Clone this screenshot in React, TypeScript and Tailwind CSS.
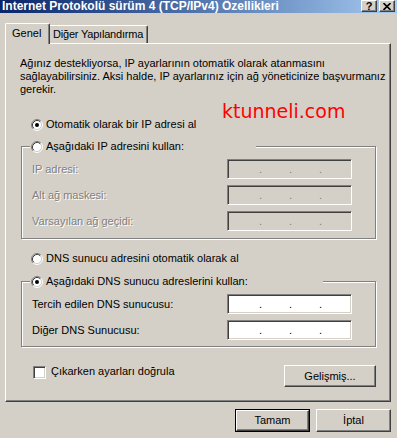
import React from "react";

function Radio({ checked }: { checked?: boolean }) {
  return (
    <svg width="12" height="12" viewBox="0 0 12 12" className="shrink-0">
      <circle cx="6" cy="6" r="4.5" fill="#fff" />
      <path d="M2.11 9.89 A5.5 5.5 0 0 1 9.89 2.11" fill="none" stroke="#808080" strokeWidth="1" />
      <path d="M9.89 2.11 A5.5 5.5 0 0 1 2.11 9.89" fill="none" stroke="#ffffff" strokeWidth="1" />
      <path d="M2.82 9.18 A4.5 4.5 0 0 1 9.18 2.82" fill="none" stroke="#404040" strokeWidth="1" />
      <path d="M9.18 2.82 A4.5 4.5 0 0 1 2.82 9.18" fill="none" stroke="#d4d0c8" strokeWidth="1" />
      {checked && <circle cx="6" cy="6" r="2" fill="#000" />}
    </svg>
  );
}

function IpField({ enabled }: { enabled?: boolean }) {
  const dot = enabled ? "text-black" : "text-[#808080]";
  return (
    <div
      className={`w-[125px] h-[20px] border border-t-[#808080] border-l-[#808080] border-b-white border-r-white shadow-[inset_1px_1px_0_#404040,inset_-1px_-1px_0_#d4d0c8] flex items-center ${
        enabled ? "bg-white" : "bg-[#d4d0c8]"
      }`}
    >
      <span className="w-[31px] shrink-0" />
      <span className={`${dot} w-[3px] shrink-0`}>.</span>
      <span className="w-[27px] shrink-0" />
      <span className={`${dot} w-[3px] shrink-0`}>.</span>
      <span className="w-[27px] shrink-0" />
      <span className={`${dot} w-[3px] shrink-0`}>.</span>
    </div>
  );
}

function Row({ label, enabled }: { label: string; enabled?: boolean }) {
  return (
    <div className="h-[20px] flex items-center">
      <span
        className={`w-[195px] shrink-0 whitespace-nowrap ${
          enabled ? "text-black" : "text-[#808080] [text-shadow:1px_1px_0_#fff]"
        }`}
      >
        {label}
      </span>
      <IpField enabled={enabled} />
    </div>
  );
}

const raised =
  "border border-t-white border-l-white border-r-[#404040] border-b-[#404040] shadow-[inset_-1px_-1px_0_#808080] bg-[#d4d0c8]";

export default function App() {
  return (
    <div className="w-[397px] h-[438px] bg-[#d4d0c8] font-['Liberation_Sans',Arial,sans-serif] text-[11px] leading-[13px] text-black overflow-hidden flex flex-col">
      {/* Title bar */}
      <div className="h-[13px] shrink-0 flex items-start bg-linear-to-r from-[#0a246a] to-[#a6caf0]">
        <span className="pl-[2px] font-bold text-white whitespace-nowrap text-[12px] leading-[13px]">
          Internet Protokolü sürüm 4 (TCP/IPv4) Özellikleri
        </span>
        <div className="ml-auto mr-[2px] flex gap-[2px]">
          <div className={`w-[16px] h-[12px] ${raised} flex items-center justify-center font-bold text-[11px] leading-[10px]`}>
            ?
          </div>
          <div className={`w-[16px] h-[12px] ${raised} flex items-center justify-center`}>
            <svg width="8" height="7" viewBox="0 0 8 7">
              <path d="M0.5 0 L7.5 7 M7.5 0 L0.5 7" stroke="#000" strokeWidth="1.6" />
            </svg>
          </div>
        </div>
      </div>

      {/* Tabs */}
      <div className="mt-[10px] ml-[5px] h-[20px] flex items-end shrink-0">
        <div className="relative z-10 -mb-[1px] w-[45px] h-[21px] border-l border-t border-white border-r border-r-[#404040] rounded-tl-[2px] rounded-tr-[2px] shadow-[inset_-1px_0_0_#808080] bg-[#d4d0c8] pl-[6px] pt-[3px]">
          Genel
        </div>
        <div className="w-[98px] h-[18px] border-t border-white border-r border-r-[#404040] rounded-tr-[2px] shadow-[inset_-1px_0_0_#808080] pl-[3px] pt-[2px] whitespace-nowrap tracking-[-0.2px]">
          Diğer Yapılandırma
        </div>
      </div>

      {/* Panel */}
      <div className="ml-[5px] w-[386px] h-[359px] shrink-0 border border-t-white border-l-white border-r-[#404040] border-b-[#404040] shadow-[inset_-1px_-1px_0_#808080] flex flex-col pl-[14px] pt-[13px]">
        <p className="whitespace-nowrap">
          Ağınız destekliyorsa, IP ayarlarının otomatik olarak atanmasını
          <br />
          sağlayabilirsiniz. Aksi halde, IP ayarlarınız için ağ yöneticinize başvurmanız
          <br />
          gerekir.
        </p>

        <div className="mt-[8px] h-[15px] leading-[15px] pl-[202px] text-[19px] text-[#ff0000] font-['DejaVu_Sans',sans-serif] whitespace-nowrap">
          ktunneli.com
        </div>

        <div className="-mt-[1px] h-[13px] flex items-center pl-[11px]">
          <Radio checked />
          <span className="ml-[3px] whitespace-nowrap">Otomatik olarak bir IP adresi al</span>
        </div>

        {/* IP group */}
        <div className="mt-[9px] ml-[1px] w-[355px] flex flex-col">
          <div className="relative z-10 ml-[9px] w-[226px] h-[13px] flex items-center bg-[#d4d0c8] pl-[1px]">
            <Radio />
            <span className="ml-[3px] whitespace-nowrap">Aşağıdaki IP adresini kullan:</span>
          </div>
          <div className="-mt-[7px] h-[93px] border border-[#808080] shadow-[inset_1px_1px_0_#fff,1px_1px_0_#fff] pt-[12px] pl-[10px] flex flex-col gap-[6px]">
            <Row label="IP adresi:" />
            <Row label="Alt ağ maskesi:" />
            <Row label="Varsayılan ağ geçidi:" />
          </div>
        </div>

        <div className="mt-[13px] h-[13px] flex items-center pl-[11px]">
          <Radio />
          <span className="ml-[3px] whitespace-nowrap">DNS sunucu adresini otomatik olarak al</span>
        </div>

        {/* DNS group */}
        <div className="mt-[10px] ml-[1px] w-[355px] flex flex-col">
          <div className="relative z-10 ml-[9px] w-[293px] h-[13px] flex items-center bg-[#d4d0c8] pl-[1px]">
            <Radio checked />
            <span className="ml-[3px] whitespace-nowrap">Aşağıdaki DNS sunucu adreslerini kullan:</span>
          </div>
          <div className="-mt-[7px] h-[66px] border border-[#808080] shadow-[inset_1px_1px_0_#fff,1px_1px_0_#fff] pt-[12px] pl-[10px] flex flex-col gap-[6px]">
            <Row label="Tercih edilen DNS sunucusu:" enabled />
            <Row label="Diğer DNS Sunucusu:" enabled />
          </div>
        </div>

        {/* Checkbox + Gelişmiş */}
        <div className="mt-[18px] mr-[14px] h-[22px] flex items-start">
          <div className="mt-[1px] ml-[13px] w-[13px] h-[13px] shrink-0 border border-t-[#808080] border-l-[#808080] border-b-white border-r-white bg-white shadow-[inset_1px_1px_0_#404040,inset_-1px_-1px_0_#d4d0c8]" />
          <span className="ml-[5px] whitespace-nowrap">Çıkarken ayarları doğrula</span>
          <div className={`ml-auto w-[92px] h-[22px] ${raised} flex items-center justify-center`}>
            Gelişmiş...
          </div>
        </div>
      </div>

      {/* Dialog buttons */}
      <div className="mt-[7px] pr-[6px] flex justify-end gap-[6px]">
        <div className="w-[75px] h-[23px] border border-black flex">
          <div className={`flex-1 ${raised} flex items-center justify-center`}>Tamam</div>
        </div>
        <div className={`w-[75px] h-[23px] ${raised} flex items-center justify-center`}>İptal</div>
      </div>
    </div>
  );
}
